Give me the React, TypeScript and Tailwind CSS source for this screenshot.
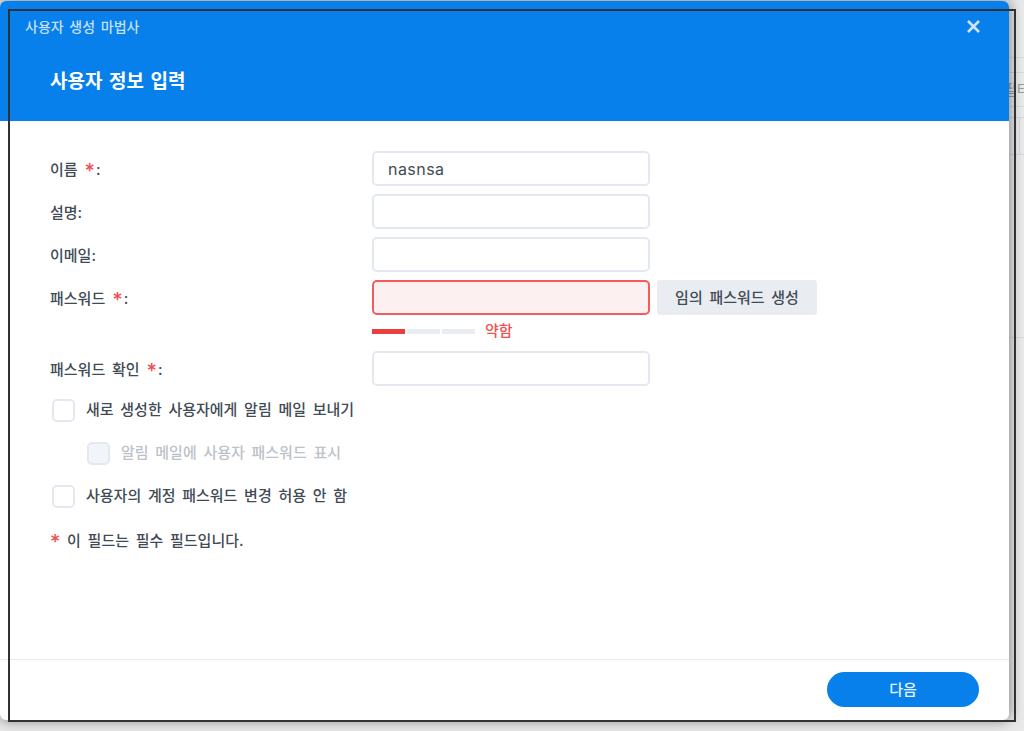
const font = { fontFamily: '"Inter", "Noto Sans CJK KR", sans-serif' };

const Star = () => (
  <span className="inline-block ml-[7px] mr-[1px] text-[20px] leading-[14px] translate-y-[3px] text-[#f05050]">*</span>
);

const Field = ({ label, required, children }: { label: string; required?: boolean; children?: React.ReactNode }) => (
  <div className="flex items-center h-[35px]">
    <div className="w-[322px] pt-[3px] text-[15px] [word-spacing:2.7px] text-[#414b55] font-medium">
      {label}
      {required && <Star />}:
    </div>
    {children}
  </div>
);

const TextBox = ({ value, error }: { value?: string; error?: boolean }) => (
  <div
    className={`w-[278px] h-[35px] rounded-[5px] border-2 px-[14px] flex items-center text-[16px] tracking-[0.45px] text-[#414b55] ${
      error ? "border-[#f25c5c] bg-[#fdf0f0]" : "border-[#e4e9f1] bg-white"
    }`}
  >
    {value}
  </div>
);

const Check = ({ label, disabled, indent }: { label: string; disabled?: boolean; indent?: boolean }) => (
  <div className={`flex items-center gap-[11px] h-[24px] ${indent ? "ml-[37px]" : "ml-[2px]"}`}>
    <div
      className={`w-[23px] h-[23px] rounded-[5px] border-2 border-[#e4e9f1] ${
        disabled ? "bg-[#f1f4f8]" : "bg-white"
      }`}
    />
    <span className={`pt-[1px] text-[15px] [word-spacing:2.7px] font-medium ${disabled ? "text-[#bcc2c9]" : "text-[#414b55]"}`}>
      {label}
    </span>
  </div>
);

export default function App() {
  return (
    <div style={font} className="relative w-[1024px] h-[731px] overflow-hidden bg-[#e9e9e9]">
      {/* page behind the dialog */}
      <div className="absolute right-0 top-[57px] w-[21px] text-[#9a9c9e]">
        <div className="h-[16px] border-y border-[#d4d8dc]" />
        <div className="h-[34px] border-b border-[#d4d8dc] text-[15px] leading-[34px] whitespace-nowrap">필터</div>
        <div className="h-[11px] border-b border-[#d4d8dc]" />
        <div className="h-[37px] border-b border-[#d4d8dc]">
          <div className="w-[17px] h-full border-r border-[#d4d8dc]" />
        </div>
        <div className="h-[183px] border-b border-[#d4d8dc]" />
      </div>

      <div className="absolute left-0 top-[1px] w-[1009px] h-[719px] flex flex-col bg-white rounded-[6px] overflow-hidden shadow-[0_0_14px_rgba(0,0,0,0.5)]">
        <div className="h-[120px] bg-[#0780ec] relative shrink-0">
          <div className="pl-[25px] pt-[17px] text-[14px] leading-[18px] [word-spacing:2px] font-medium text-[#c4dffa]">
            사용자 생성 마법사
          </div>
          <div className="pl-[50px] pt-[33px] text-[19px] leading-[26px] [word-spacing:2px] font-bold text-white">
            사용자 정보 입력
          </div>
          <svg className="absolute left-[966px] top-[18px]" width="15" height="15" viewBox="0 0 15 15">
            <path d="M2 2l11 11M13 2L2 13" stroke="#cfe4fb" strokeWidth="2.6" />
          </svg>
        </div>

        <div className="flex-1 pl-[50px] pt-[30px] flex flex-col">
          <div className="flex flex-col gap-[8px]">
            <Field label="이름" required>
              <TextBox value="nasnsa" />
            </Field>
            <Field label="설명">
              <TextBox />
            </Field>
            <Field label="이메일">
              <TextBox />
            </Field>
            <Field label="패스워드" required>
              <TextBox error />
              <div className="ml-[7px] w-[160px] h-[35px] pt-[1px] rounded-[3px] bg-[#e9edf2] flex items-center justify-center text-[15px] [word-spacing:2.7px] font-medium text-[#414b55]">
                임의 패스워드 생성
              </div>
            </Field>
          </div>
          <div className="ml-[322px] h-[36px] pb-[4px] flex items-center">
            <div className="flex gap-[2px]">
              <div className="w-[33px] h-[5px] bg-[#e84040]" />
              <div className="w-[33px] h-[5px] bg-[#e9edf2]" />
              <div className="w-[33px] h-[5px] bg-[#e9edf2]" />
            </div>
            <span className="ml-[10px] pt-[1px] text-[15px] font-medium text-[#f05050]">약함</span>
          </div>
          <Field label="패스워드 확인" required>
            <TextBox />
          </Field>
          <div className="mt-[12px] flex flex-col gap-[19px]">
            <Check label="새로 생성한 사용자에게 알림 메일 보내기" />
            <Check label="알림 메일에 사용자 패스워드 표시" disabled indent />
            <Check label="사용자의 계정 패스워드 변경 허용 안 함" />
          </div>
          <div className="mt-[22px] text-[15px] [word-spacing:2.7px] font-medium text-[#414b55]">
            <span className="inline-block text-[20px] leading-[14px] translate-y-[3px] text-[#f05050]">*</span> 이 필드는 필수 필드입니다.
          </div>
        </div>

        <div className="h-[61px] shrink-0 border-t border-[#e6ebf1] pb-[1px] flex items-center justify-end pr-[30px]">
          <div className="w-[152px] h-[35px] pt-[1px] rounded-full bg-[#0780ec] flex items-center justify-center text-[15px] font-medium text-[#e6f2fd]">
            다음
          </div>
        </div>
      </div>

      {/* dark frame drawn over the capture */}
      <div className="absolute left-[8px] top-[9px] w-[1008px] h-[713px] border-2 border-[#2e3236] pointer-events-none" />
    </div>
  );
}
